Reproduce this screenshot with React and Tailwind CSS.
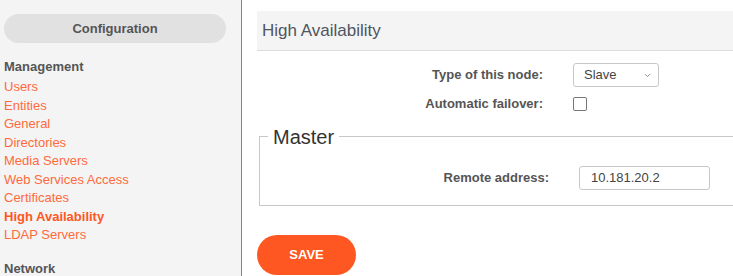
import { ChevronDown } from 'lucide-react'

const links = [
  'Users',
  'Entities',
  'General',
  'Directories',
  'Media Servers',
  'Web Services Access',
  'Certificates',
  'High Availability',
  'LDAP Servers',
]

function Sidebar() {
  return (
    <aside className="w-[242px] shrink-0 border-r border-[#ff5722] bg-[#f4f4f4] pl-1 pt-[14px]">
      <div className="flex h-[29px] w-[222px] items-center justify-center rounded-full bg-[#e1e1e1] text-[13px] font-bold text-[#555]">
        Configuration
      </div>
      <h3 className="mt-[15px] text-[13px] font-bold leading-[18px] text-[#555]">Management</h3>
      <ul className="mt-[2px]">
        {links.map((l) => (
          <li
            key={l}
            className={
              l === 'High Availability'
                ? 'text-[13px] font-bold leading-[18.5px] text-[#ff5722]'
                : 'text-[13px] leading-[18.5px] text-[#ff6a3d]'
            }
          >
            {l}
          </li>
        ))}
      </ul>
      <h3 className="mt-[15px] text-[13px] font-bold leading-[18px] text-[#555]">Network</h3>
    </aside>
  )
}

function Row({ label, children, className }) {
  return (
    <div className={'flex items-center ' + (className || '')}>
      <label className="w-[286px] text-right text-[13px] font-bold text-[#555]">{label}</label>
      <div className="ml-[30px]">{children}</div>
    </div>
  )
}

export default function App() {
  return (
    <div className="flex h-[276px] w-[733px] overflow-hidden bg-white font-['Liberation_Sans',Arial,sans-serif]">
      <Sidebar />
      <main className="w-[540px] shrink-0 pl-[15px] pt-[11px]">
        <div className="flex h-[40px] items-center border-b border-[#dcdcdc] bg-[#f4f4f4] pl-[5px] pt-[1px]">
          <h2 className="text-[17px] text-[#4f5561]">High Availability</h2>
        </div>

        <Row label="Type of this node:" className="mt-[12px]">
          <div className="relative flex h-[24px] w-[86px] items-center rounded-[3px] border border-[#c8c8c8] bg-white pl-[10px] text-[13px] text-[#444]">
            Slave
            <ChevronDown className="absolute right-[6px] top-[7px] h-[9px] w-[9px] text-[#666]" strokeWidth={2} />
          </div>
        </Row>

        <Row label="Automatic failover:" className="mt-[7px]">
          <div className="h-[14px] w-[14px] rounded-[2px] border border-[#777] bg-white" />
        </Row>

        <fieldset className="mt-[11px] ml-[2px] h-[81px] border border-[#c8c8c8] pl-[3px]">
          <legend className="ml-[5px] px-[5px] text-[20px] leading-[24px] text-[#333]">Master</legend>
          <Row label="Remote address:" className="mt-[17px]">
            <div className="flex h-[24px] w-[131px] items-center rounded-[3px] border border-[#c8c8c8] bg-white pl-[11px] text-[13px] text-[#444]">
              10.181.20.2
            </div>
          </Row>
        </fieldset>

        <button className="mt-[29px] flex h-[40px] w-[99px] items-center justify-center rounded-full bg-[#ff5722] text-[13px] font-bold text-white">
          SAVE
        </button>
      </main>
    </div>
  )
}
